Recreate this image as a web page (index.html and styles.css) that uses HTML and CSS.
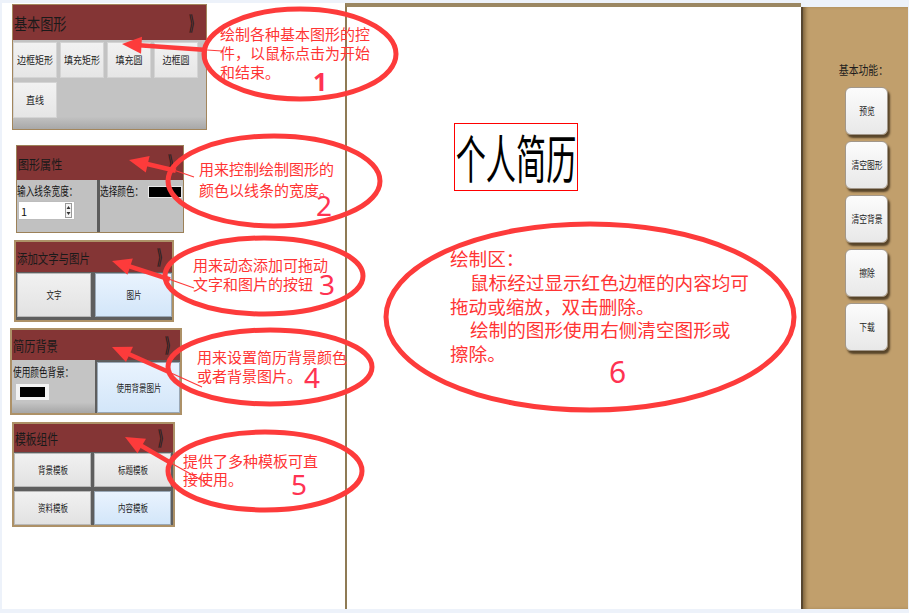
FILE: index.html
```html
<!DOCTYPE html>
<html lang="zh-CN">
<head>
<meta charset="utf-8">
<title>个人简历</title>
<link rel="stylesheet" href="styles.css">
</head>
<body>
<div class="app">
  <aside class="sidebar">
    <section class="panel p1">
      <header class="ph"><span class="pt">基本图形</span><span class="chev">》</span></header>
      <div class="pb">
        <div class="btn"><span>边框矩形</span></div>
        <div class="btn"><span>填充矩形</span></div>
        <div class="btn"><span>填充圆</span></div>
        <div class="btn"><span>边框圆</span></div>
        <div class="btn"><span>直线</span></div>
      </div>
    </section>

    <section class="panel p2">
      <header class="ph"><span class="pt">图形属性</span><span class="chev">》</span></header>
      <div class="pb">
        <div class="col">
          <span class="lbl">输入线条宽度：</span>
          <div class="num-input"><span>1</span>
            <svg class="spin" width="7" height="15" viewBox="0 0 7 15"><rect x="0.5" y="0.5" width="6" height="14" fill="#f4f4f4" stroke="#9a9a9a"/><path d="M1.5 6 L3.5 3 L5.5 6 Z M1.5 9 L3.5 12 L5.5 9 Z" fill="#333"/></svg>
          </div>
        </div>
        <div class="sep"></div>
        <div class="col row">
          <span class="lbl">选择颜色：</span>
          <span class="swatch"></span>
        </div>
      </div>
    </section>

    <section class="panel p3">
      <header class="ph"><span class="pt">添加文字与图片</span><span class="chev">》</span></header>
      <div class="pb">
        <div class="btn"><span>文字</span></div>
        <div class="btn blue"><span>图片</span></div>
      </div>
    </section>

    <section class="panel p4">
      <header class="ph"><span class="pt">简历背景</span><span class="chev">》</span></header>
      <div class="pb">
        <div class="col">
          <span class="lbl">使用颜色背景：</span>
          <span class="swatch2"></span>
        </div>
        <div class="btn blue"><span>使用背景图片</span></div>
      </div>
    </section>

    <section class="panel p5">
      <header class="ph"><span class="pt">模板组件</span><span class="chev">》</span></header>
      <div class="pb">
        <div class="btn"><span>背景模板</span></div>
        <div class="btn"><span>标题模板</span></div>
        <div class="btn"><span>资料模板</span></div>
        <div class="btn blue"><span>内容模板</span></div>
      </div>
    </section>
  </aside>

  <main class="canvas">
    <div class="title-box"><span>个人简历</span></div>
  </main>

  <aside class="tools">
    <div class="tools-label"><span>基本功能：</span></div>
    <div class="tbtn"><span>预览</span></div>
    <div class="tbtn"><span>清空图形</span></div>
    <div class="tbtn"><span>清空背景</span></div>
    <div class="tbtn"><span>擦除</span></div>
    <div class="tbtn"><span>下载</span></div>
  </aside>
</div>

<div class="notes">
  <svg class="marks" width="909" height="613" viewBox="0 0 909 613">
    <g fill="none" stroke="#fd3b3b" stroke-width="5">
      <ellipse cx="300" cy="54" rx="96" ry="45"/>
      <ellipse cx="274" cy="181" rx="106" ry="45"/>
      <ellipse cx="264" cy="276" rx="99" ry="38"/>
      <ellipse cx="270" cy="367" rx="102" ry="37"/>
      <ellipse cx="265" cy="471" rx="97" ry="39"/>
      <ellipse cx="590" cy="317" rx="204" ry="93"/>
    </g>
    <g stroke="#fd3b3b" fill="#fd3b3b">
      <polygon points="122,44 142,36.8 141,53.8" stroke="none"/>
      <line x1="139" y1="45.2" x2="207" y2="50" stroke-width="4.5"/>
      <line x1="207" y1="50" x2="222" y2="51" stroke-width="1.2"/>

      <polygon points="129,160 149.6,156 145.8,172.4" stroke="none"/>
      <line x1="146" y1="163.8" x2="175.8" y2="170.7" stroke-width="4.5"/>
      <line x1="175.8" y1="170.7" x2="194" y2="177" stroke-width="1.2"/>

      <polygon points="112,261 132.8,258.5 127.4,274.7" stroke="none"/>
      <line x1="128" y1="265.9" x2="170" y2="279.5" stroke-width="4.5"/>
      <line x1="170" y1="279.5" x2="194" y2="288" stroke-width="1.2"/>

      <polygon points="112,347 133,346.8 126,362" stroke="none"/>
      <line x1="127.5" y1="353.5" x2="170.5" y2="372.8" stroke-width="4.5"/>
      <line x1="170.5" y1="372.8" x2="202" y2="387" stroke-width="1.2"/>

      <polygon points="125,437 146,438.8 137.5,453.2" stroke="none"/>
      <line x1="140" y1="445" x2="171" y2="463" stroke-width="4.5"/>
      <line x1="171" y1="463" x2="205" y2="482" stroke-width="1.2"/>
    </g>
  </svg>

  <div class="note n1">绘制各种基本图形的控<br>件，以鼠标点击为开始<br>和结束。</div>
  <div class="num d1">1</div>

  <div class="note n2">用来控制绘制图形的<br>颜色以线条的宽度。</div>
  <div class="num d2">2</div>

  <div class="note n3">用来动态添加可拖动<br>文字和图片的按钮</div>
  <div class="num d3">3</div>

  <div class="note n4">用来设置简历背景颜色<br>或者背景图片。</div>
  <div class="num d4">4</div>

  <div class="note n5">提供了多种模板可直<br>接使用。</div>
  <div class="num d5">5</div>

  <div class="note n6">绘制区：<br><span class="ind">鼠标经过显示红色边框的内容均可</span><br>拖动或缩放，双击删除。<br><span class="ind">绘制的图形使用右侧清空图形或</span><br>擦除。</div>
  <div class="num d6">6</div>
</div>
</body>
</html>
```

FILE: styles.css
```css
* { box-sizing: border-box; margin: 0; padding: 0; }

html, body { width: 909px; height: 613px; overflow: hidden; }

body {
  position: relative;
  background: #edf2fa;
  font-family: "Noto Sans CJK SC", "Noto Sans", sans-serif;
  color: #1c1c1c;
}

.app {
  display: flex;
  width: 906px;
  height: 606px;
  margin: 3px 1px 0 2px;
}

/* ---------- sidebar ---------- */
.sidebar {
  width: 343px;
  flex: none;
  background: #fff;
  display: flex;
  flex-direction: column;
  align-items: flex-start;
}

.panel {
  flex: none;
  display: flex;
  flex-direction: column;
  border: 2px solid #ad9167;
}

.ph {
  flex: none;
  background: #843535;
  display: flex;
  align-items: center;
  justify-content: space-between;
  padding: 0 6px 0 1px;
}

.pt {
  display: inline-block;
  white-space: nowrap;
  transform-origin: left center;
  color: #1a1a1a;
  line-height: 1;
}

.chev {
  display: inline-block;
  font-size: 20px;
  font-weight: 700;
  color: #1e1e1e;
  transform: scaleX(.5);
  transform-origin: center;
  line-height: 1;
  margin-right: -6px;
}

.pb { flex: 1; font-size: 12px; line-height: 14px; }

.btn {
  display: flex;
  align-items: center;
  justify-content: center;
  background: linear-gradient(#f1f1f1, #e2e2e2);
  border: 1px solid #b9b9b9;
  font-size: 10px;
  line-height: 12px;
  color: #222;
  white-space: nowrap;
}

.btn span { display: inline-block; transform: scaleX(.75); }

.btn.blue {
  background: linear-gradient(#e9f3fe, #d3e6f9);
  border-color: #9aa8b6;
}

.lbl {
  display: block;
  font-size: 12px;
  line-height: 14px;
  white-space: nowrap;
  transform: scaleX(.72);
  transform-origin: left center;
  color: #141414;
}

/* panel 1 */
.p1 { margin: 1px 0 0 10px; width: 195px; height: 126px; border-width: 1px; border-color: #a3865c; }
.p1 .ph { height: 35px; padding-right: 8px; }
.p1 .pt { font-size: 16px; transform: scaleX(.82); }
.p1 .pb {
  display: grid;
  grid-template-columns: repeat(4, 44px);
  grid-template-rows: 36px 36px;
  column-gap: 3px;
  row-gap: 4px;
  align-content: start;
  padding-top: 2px;
  background: linear-gradient(#c3c3c3 0, #c3c3c3 86%, #a8a8a8 100%);
}
.p1 .btn { background: linear-gradient(#f2f2f2, #e6e6e6); border-color: #d4d4d4; }
.p1 .btn span { transform: scaleX(.9); }

/* panel 2 */
.p2 { margin: 15px 0 0 14px; width: 168px; height: 88px; border-width: 1px; border-color: #9c8158; }
.p2 .ph { height: 34px; }
.p2 .pt { font-size: 13px; transform: scaleX(.85); }
.p2 .pb {
  display: grid;
  grid-template-columns: 80px 3px 1fr;
  background: #c1c1c1;
}
.p2 .col { padding: 4px 0 0 0; }
.p2 .col.row { display: flex; align-items: flex-start; }
.p2 .col.row .lbl { flex: none; }
.p2 .sep { background: #5c5c5c; }

.num-input {
  margin: 3px 0 0 1px;
  width: 57px;
  height: 19px;
  background: #fff;
  border: 1px solid #bdbdbd;
  display: flex;
  align-items: center;
  justify-content: space-between;
  padding: 0 1px 0 2px;
  font-size: 11px;
  line-height: 12px;
  color: #111;
}
.spin { display: block; margin-right: 1px; }

.swatch {
  display: block;
  margin: 2px 0 0 -12px;
  width: 34px;
  height: 12px;
  background: #000;
  border: 1px solid #e8e8e8;
  flex: none;
}

/* panel 3 */
.p3 { margin: 7px 0 0 12px; width: 160px; height: 82px; }
.p3 .ph { height: 30px; }
.p3 .pt { font-size: 13px; transform: scaleX(.8); }
.p3 .pb {
  display: grid;
  grid-template-columns: 74px 1fr;
  column-gap: 4px;
  padding: 1px 0 3px 1px;
  background: #5e5e5e;
}

/* panel 4 */
.p4 { margin: 6px 0 0 8px; width: 172px; height: 87px; }
.p4 .ph { height: 30px; }
.p4 .pt { font-size: 14px; transform: scaleX(.8); }
.p4 .pb {
  display: grid;
  grid-template-columns: 83px 1fr;
  column-gap: 2px;
  background: #5e5e5e;
}
.p4 .col {
  background: linear-gradient(#c4c4c4 0, #c4c4c4 80%, #a6a6a6 100%);
  padding: 5px 0 0 1px;
}
.p4 .btn { margin: 2px 0 0 0; }
.swatch2 {
  display: block;
  margin: 5px 0 0 3px;
  width: 33px;
  height: 16px;
  background: #000;
  border: 3px solid #f3f3f3;
  border-width: 3px 4px;
}

/* panel 5 */
.p5 { margin: 7px 0 0 10px; width: 163px; height: 105px; }
.p5 .ph { height: 28px; }
.p5 .pt { font-size: 14px; transform: scaleX(.77); }
.p5 .pb {
  display: grid;
  grid-template-columns: 77px 77px;
  grid-template-rows: 34px 34px;
  column-gap: 3px;
  row-gap: 4px;
  padding: 1px 0 0 0;
  background: #5e5e5e;
}

/* ---------- canvas ---------- */
.canvas {
  position: relative;
  width: 456px;
  flex: none;
  background: #fff;
  border-left: 2px solid #8f7b55;
  border-top: 4px solid #9b8762;
}

.title-box {
  position: absolute;
  left: 107px;
  top: 116px;
  width: 124px;
  height: 68px;
  border: 1px solid #f00;
  display: flex;
  align-items: center;
  justify-content: center;
}
.title-box span {
  display: inline-block;
  font-size: 52px;
  line-height: 1;
  white-space: nowrap;
  color: #000;
  transform: scaleX(.58);
}

/* ---------- tools ---------- */
.tools {
  width: 107px;
  flex: none;
  margin-top: 4px;
  background: #c19f6c;
  border-left: 2px solid #574630;
  box-shadow: inset 4px 0 4px -2px rgba(70, 50, 20, .6);
  display: flex;
  flex-direction: column;
  align-items: flex-end;
  padding: 55px 20px 0 0;
}

.tools-label {
  font-size: 12px;
  line-height: 16px;
  white-space: nowrap;
  color: #1d1d1d;
  margin-bottom: 3px;
}
.tools-label span { display: inline-block; transform: scaleX(.82); transform-origin: right center; }

.tbtn {
  width: 43px;
  height: 48px;
  margin-top: 6px;
  border-radius: 6px;
  background: linear-gradient(#fcfcfc, #e8e8e8);
  border: 1px solid #a2978a;
  box-shadow: 2px 3px 2px rgba(60, 45, 25, .8);
  display: flex;
  align-items: center;
  justify-content: center;
  font-size: 10px;
  line-height: 12px;
  color: #222;
  white-space: nowrap;
}
.tbtn span { display: inline-block; transform: scaleX(.78); }

/* ---------- annotations ---------- */
.notes {
  position: absolute;
  left: 0;
  top: 0;
  width: 909px;
  height: 613px;
  pointer-events: none;
}
.marks { position: absolute; left: 0; top: 0; }

.note {
  position: absolute;
  color: #ff3434;
  font-size: 15px;
  line-height: 19px;
  white-space: nowrap;
}
.n1 { left: 220px; top: 24px; }
.n2 { left: 199px; top: 158px; line-height: 21px; }
.n3 { left: 193px; top: 255px; }
.n4 { left: 197px; top: 347px; }
.n5 { left: 183px; top: 452px; line-height: 18px; }
.n6 { left: 450px; top: 246px; font-size: 18.6px; line-height: 23.8px; }
.ind { padding-left: 20px; }

.num {
  position: absolute;
  color: #ff3352;
  font-family: "Noto Sans", "Open Sans", sans-serif;
  font-size: 28px;
  line-height: .75;
}
.d1 { left: 313px; top: 72px; font-size: 25px; font-weight: 700; }
.d2 { left: 316px; top: 195px; }
.d3 { left: 319px; top: 274px; }
.d4 { left: 304px; top: 367px; }
.d5 { left: 291px; top: 474px; }
.d6 { left: 609px; top: 361px; font-size: 30px; }
```
